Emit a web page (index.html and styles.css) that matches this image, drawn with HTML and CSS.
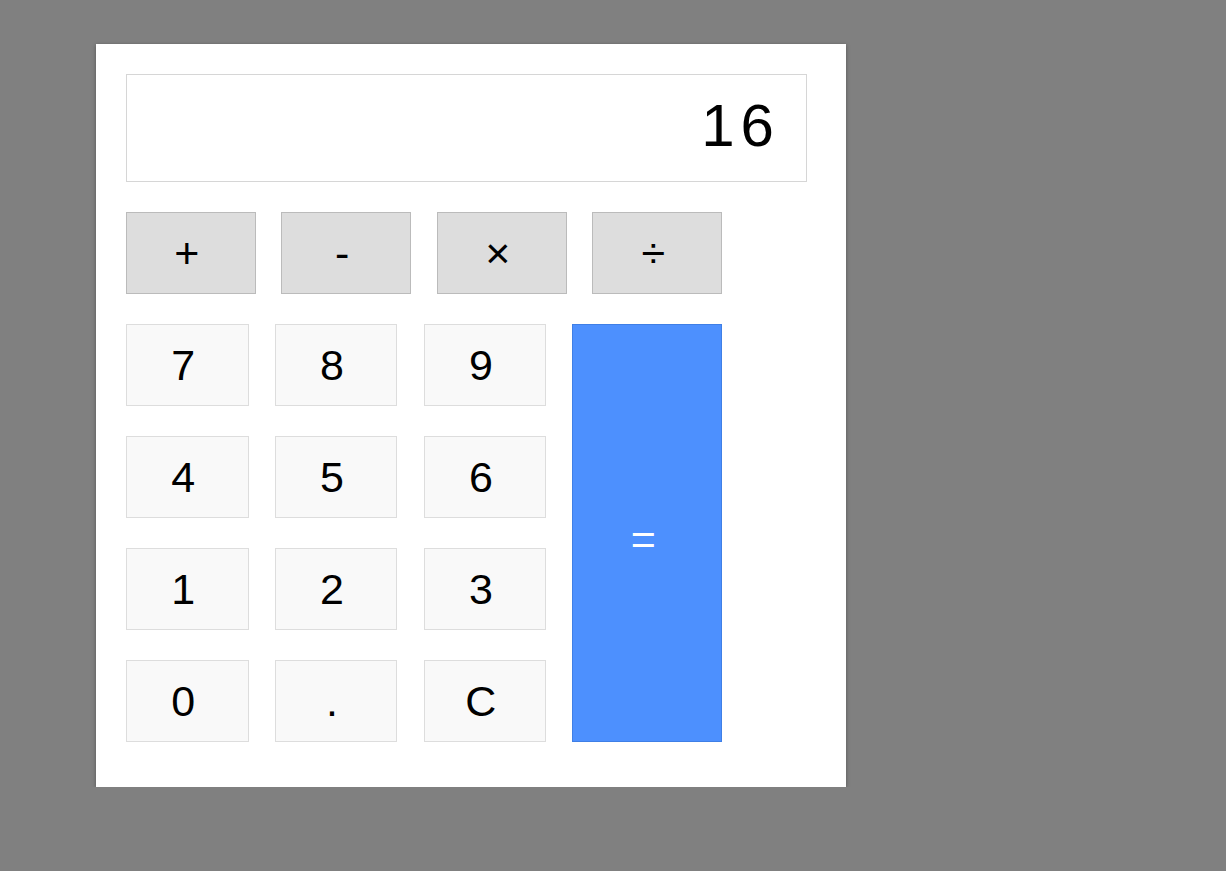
FILE: index.html
```html
<!DOCTYPE html>
<html lang="en">
<head>
<meta charset="utf-8">
<title>Calculator</title>
<link rel="stylesheet" href="styles.css">
</head>
<body>
<div class="calc">
  <div class="display">16</div>
  <div class="ops">
    <button class="btn op">+</button>
    <button class="btn op">-</button>
    <button class="btn op">&times;</button>
    <button class="btn op">&divide;</button>
  </div>
  <div class="keys">
    <button class="btn num">7</button>
    <button class="btn num">8</button>
    <button class="btn num">9</button>
    <button class="btn eq">=</button>
    <button class="btn num">4</button>
    <button class="btn num">5</button>
    <button class="btn num">6</button>
    <button class="btn num">1</button>
    <button class="btn num">2</button>
    <button class="btn num">3</button>
    <button class="btn num">0</button>
    <button class="btn num">.</button>
    <button class="btn num">C</button>
  </div>
</div>
</body>
</html>
```
FILE: styles.css
```css
html, body {
  margin: 0;
  padding: 0;
  background: #808080;
}
body {
  padding: 44px 0 0 96px;
  font-family: "Liberation Sans", Arial, sans-serif;
}
.calc {
  box-sizing: border-box;
  width: 750px;
  height: 743px;
  background: #fff;
  padding: 30px;
  box-shadow: 0 1px 4px rgba(0, 0, 0, 0.35);
  display: flex;
  flex-direction: column;
  gap: 30px;
}
.display {
  box-sizing: border-box;
  width: 681px;
  height: 108px;
  border: 1px solid #d6d6d6;
  display: flex;
  align-items: center;
  justify-content: flex-end;
  padding: 0 26px 6px 0;
  font-size: 60px;
  letter-spacing: 6px;
  color: #000;
}
.btn {
  box-sizing: border-box;
  margin: 0;
  height: 82px;
  font-family: "Liberation Sans", Arial, sans-serif;
  font-size: 43px;
  color: #000;
  padding: 0 8px 0 0;
  border-radius: 0;
  line-height: normal;
  display: flex;
  align-items: center;
  justify-content: center;
}
.ops {
  display: flex;
  gap: 25.9px;
}
.op {
  width: 129.6px;
  background: #dddddd;
  border: 1px solid #bbbbbb;
}
.keys {
  display: grid;
  grid-template-columns: 122.5px 122.5px 122.5px 149.6px;
  grid-auto-rows: 82px;
  column-gap: 26.3px;
  row-gap: 30px;
}
.num {
  background: #f9f9f9;
  border: 1px solid #dddddd;
}
.eq {
  grid-column: 4;
  grid-row: 1 / span 4;
  height: auto;
  background: #4d90fe;
  border: 1px solid #3f7fe6;
  color: #fff;
  padding: 12px 8px 0 0;
}
```
